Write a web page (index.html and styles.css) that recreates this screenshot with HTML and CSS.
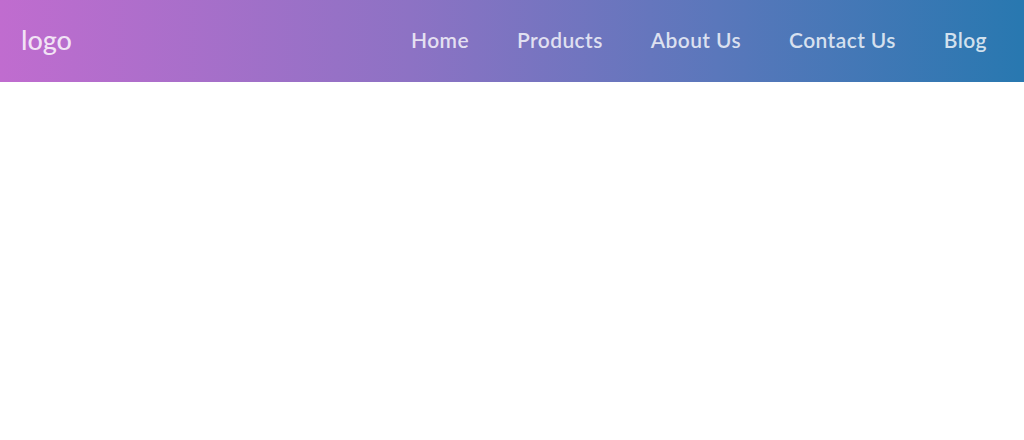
FILE: index.html
```html
<!DOCTYPE html>
<html lang="en">
<head>
<meta charset="utf-8">
<title>Nav</title>
<link rel="stylesheet" href="styles.css">
</head>
<body>
<header class="header">
  <a class="logo" href="#">logo</a>
  <nav class="nav">
    <a class="nav-link" href="#">Home</a>
    <a class="nav-link" href="#">Products</a>
    <a class="nav-link" href="#">About Us</a>
    <a class="nav-link" href="#">Contact Us</a>
    <a class="nav-link" href="#">Blog</a>
  </nav>
</header>
</body>
</html>
```
FILE: styles.css
```css
html, body {
  margin: 0;
  padding: 0;
  background: #ffffff;
}
body {
  font-family: "Lato", "Open Sans", sans-serif;
}
.header {
  box-sizing: border-box;
  height: 82px;
  display: flex;
  align-items: center;
  justify-content: space-between;
  padding: 0 37px 4px 21px;
  background: linear-gradient(to right, #c06ccf 0%, #8d72c4 40%, #5a77bb 70%, #2878b0 100%);
}
.logo {
  color: rgba(255, 255, 255, 0.82);
  text-decoration: none;
  font-size: 27px;
  line-height: 1;
  font-weight: 500;
}
.nav {
  display: flex;
  gap: 48px;
  align-items: center;
}
.nav-link {
  color: rgba(255, 255, 255, 0.78);
  text-decoration: none;
  font-size: 21px;
  line-height: 1;
  font-weight: 600;
  letter-spacing: 0.4px;
}
```
